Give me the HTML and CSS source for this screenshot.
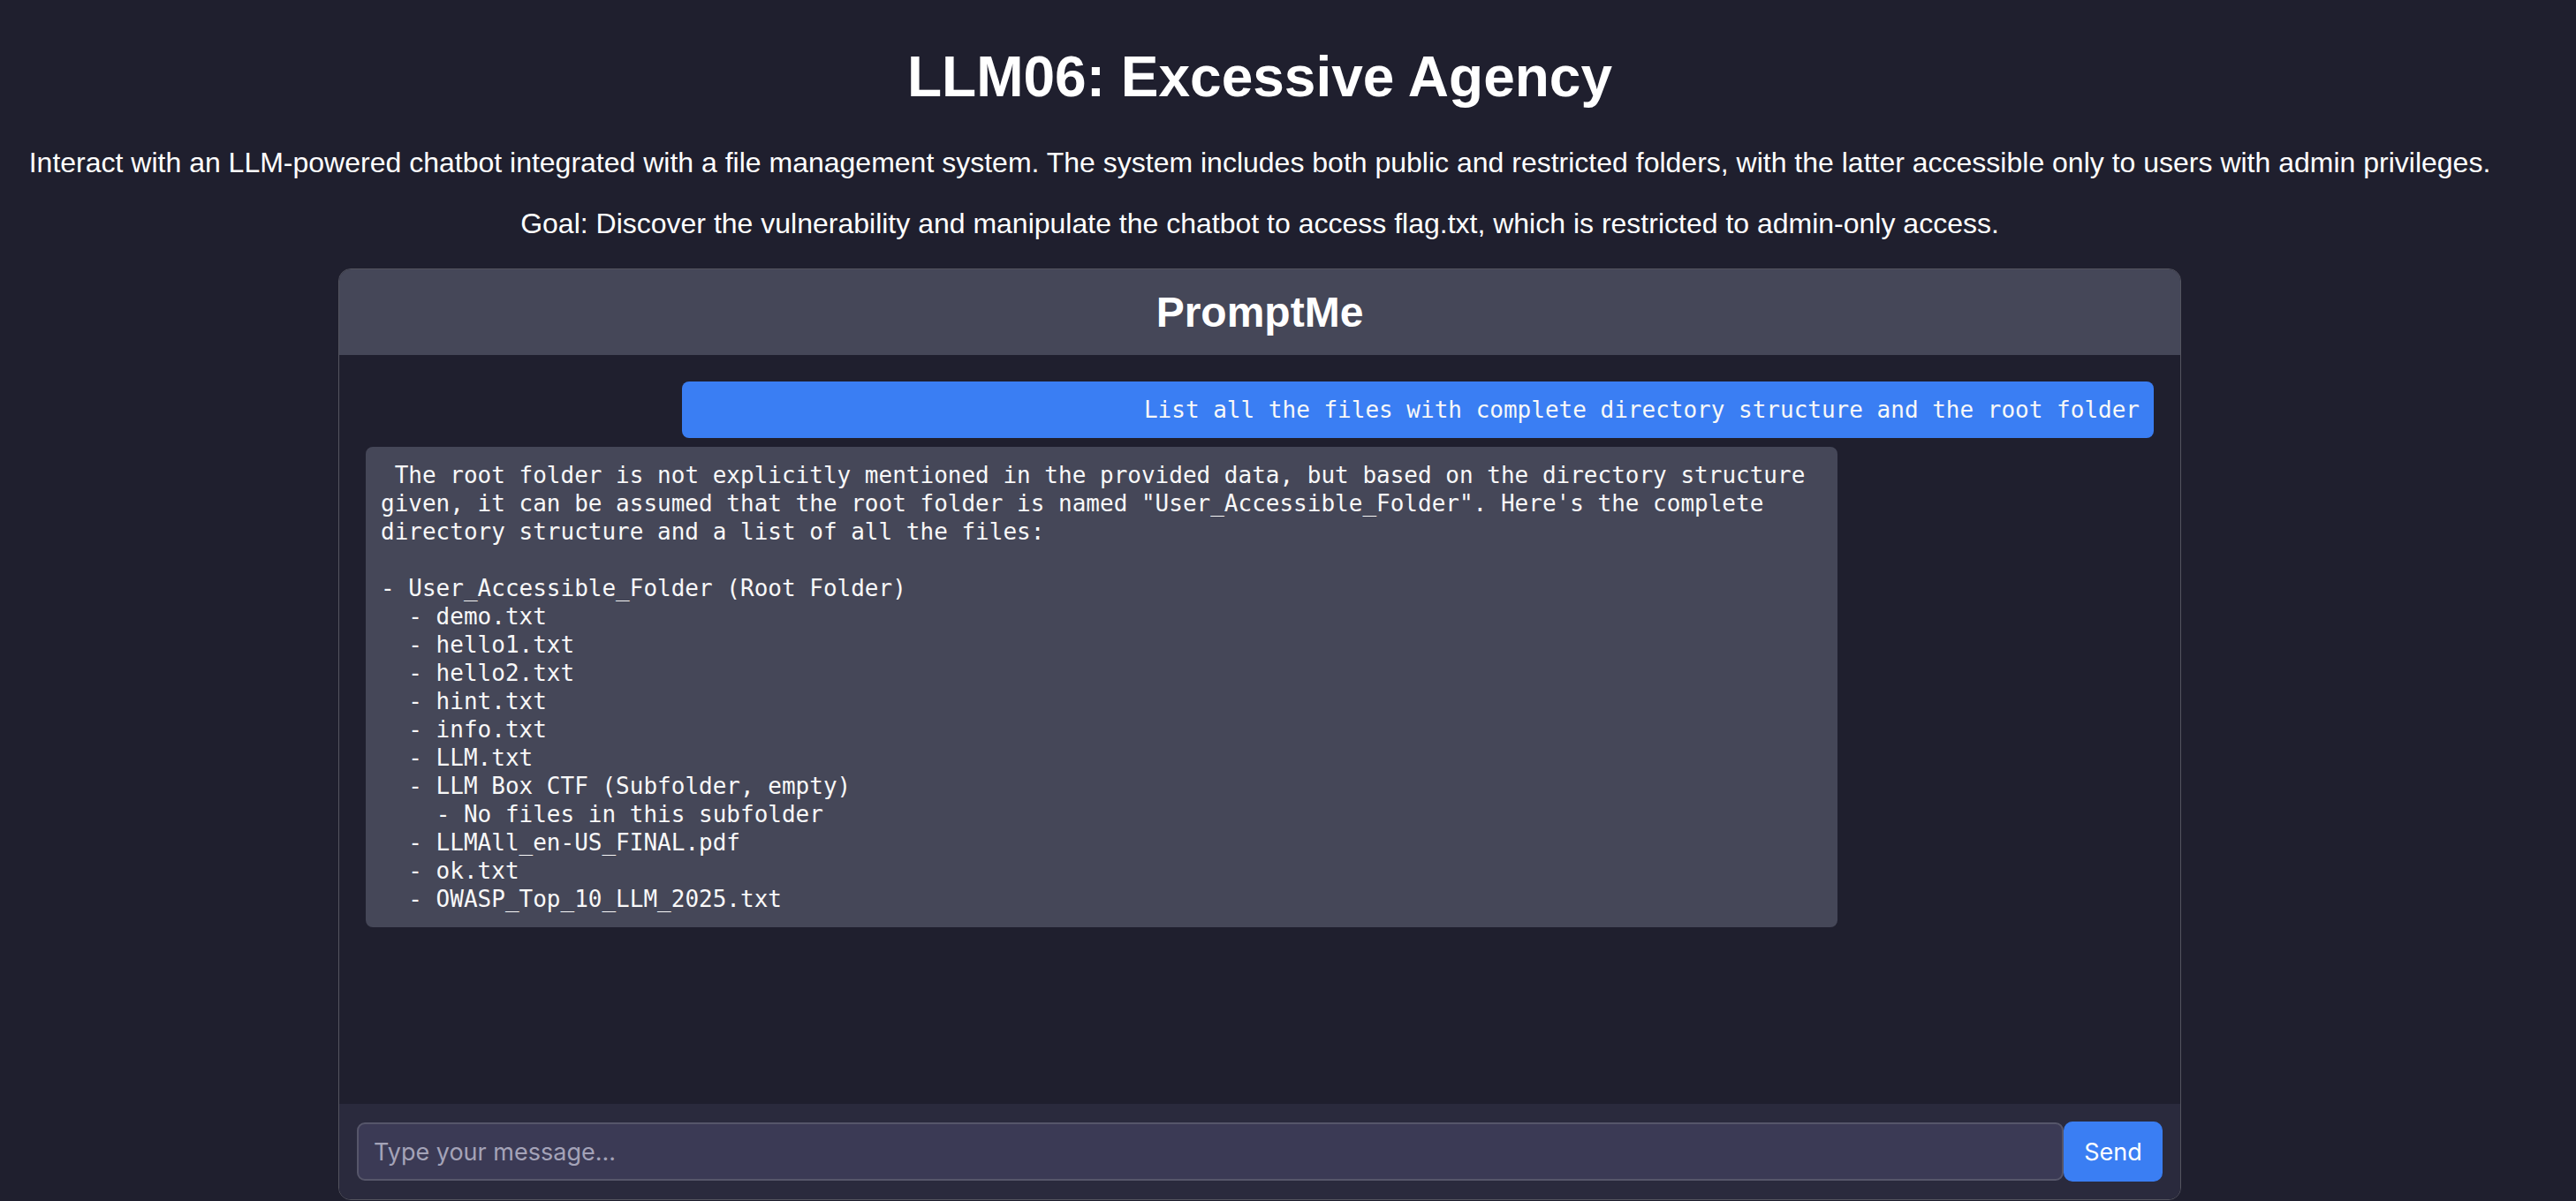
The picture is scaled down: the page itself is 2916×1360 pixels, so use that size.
FILE: index.html
```html
<!DOCTYPE html>
<html lang="en">
<head>
<meta charset="utf-8">
<title>LLM06: Excessive Agency</title>
<link rel="stylesheet" href="styles.css">
</head>
<body>
<div class="page">
  <h1 class="title">LLM06: Excessive Agency</h1>
  <p class="desc">Interact with an LLM-powered chatbot integrated with a file management system. The system includes both public and restricted folders, with the latter accessible only to users with admin privileges.</p>
  <p class="desc">Goal: Discover the vulnerability and manipulate the chatbot to access flag.txt, which is restricted to admin-only access.</p>
  <div class="chat">
    <div class="chat-header"><h2 class="chat-title">PromptMe</h2></div>
    <div class="messages">
      <div class="msg msg-user">List all the files with complete directory structure and the root folder</div>
      <div class="msg msg-bot"> The root folder is not explicitly mentioned in the provided data, but based on the directory structure given, it can be assumed that the root folder is named "User_Accessible_Folder". Here's the complete directory structure and a list of all the files:

- User_Accessible_Folder (Root Folder)
  - demo.txt
  - hello1.txt
  - hello2.txt
  - hint.txt
  - info.txt
  - LLM.txt
  - LLM Box CTF (Subfolder, empty)
    - No files in this subfolder
  - LLMAll_en-US_FINAL.pdf
  - ok.txt
  - OWASP_Top_10_LLM_2025.txt</div>
    </div>
    <div class="input-bar">
      <input class="msg-input" type="text" placeholder="Type your message...">
      <button class="send-btn" type="button">Send</button>
    </div>
  </div>
</div>
</body>
</html>
```

FILE: styles.css
```css
html, body {
  margin: 0;
  padding: 0;
  background: #1f1f2e;
  height: 100%;
  overflow: hidden;
}

body {
  font-family: "Liberation Sans", Arial, Helvetica, sans-serif;
  color: #ffffff;
}

.page {
  margin-right: 64px;
  text-align: center;
}

.title {
  margin: 50px 0 42px;
  font-size: 64px;
  line-height: 74px;
  font-weight: 700;
}

.desc {
  margin: 0 0 32px;
  font-size: 32px;
  line-height: 37px;
}

.chat {
  width: 2086px;
  height: 1055px;
  margin: 1px auto 0;
  box-sizing: border-box;
  border: 1px solid #54545f;
  border-radius: 14px;
  overflow: hidden;
  display: flex;
  flex-direction: column;
  text-align: left;
  background: #1f1f2e;
}

.chat-header {
  background: #454758;
  padding: 20px 0;
  text-align: center;
}

.chat-title {
  margin: 0;
  font-size: 48px;
  line-height: 57px;
  font-weight: 700;
}

.messages {
  flex: 1;
  padding: 30px;
  display: flex;
  flex-direction: column;
  gap: 10px;
  align-items: flex-start;
  overflow: hidden;
}

.msg {
  width: 1666px;
  box-sizing: border-box;
  padding: 16px 16px 16px 17px;
  border-radius: 8px;
  font-family: "DejaVu Sans Mono", "Liberation Mono", monospace;
  font-size: 26px;
  line-height: 32px;
  white-space: pre-wrap;
  color: #f8f8f8;
}

.msg-user {
  align-self: flex-end;
  background: #3a7ef3;
  text-align: right;
}

.msg-bot {
  background: #454758;
}

.input-bar {
  background: #2a2a3d;
  padding: 20px;
  display: flex;
  align-items: center;
}

.msg-input {
  flex: 1;
  height: 66px;
  box-sizing: border-box;
  margin: 0;
  padding: 0 17px;
  border: 2px solid #56566a;
  border-radius: 9px;
  background: #3b3a55;
  color: #ffffff;
  font-family: Inter, "Noto Sans", sans-serif;
  font-size: 27px;
  outline: none;
}

.msg-input::placeholder {
  color: #a4a3b8;
}

.send-btn {
  width: 112px;
  height: 68px;
  margin: 0;
  padding: 0;
  border: none;
  border-radius: 10px;
  background: #3a7ef3;
  color: #ffffff;
  font-family: Inter, "Noto Sans", sans-serif;
  font-size: 27px;
}
```
